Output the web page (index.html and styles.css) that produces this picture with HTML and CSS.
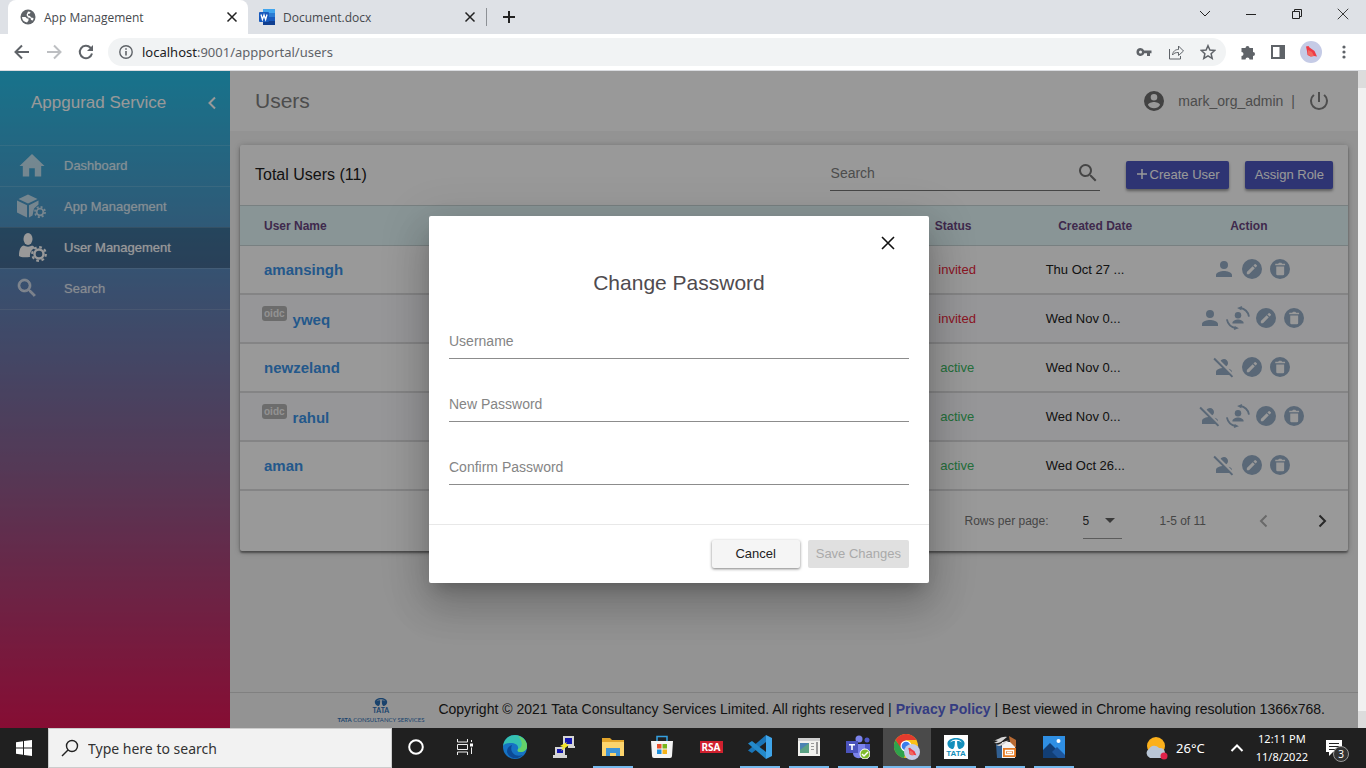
FILE: index.html
```html
<!DOCTYPE html>
<html lang="en">
<head>
<meta charset="utf-8">
<title>App Management</title>
<link rel="stylesheet" href="styles.css">
</head>
<body>
<svg class="sprite" aria-hidden="true">
  <symbol id="person" viewBox="0 0 24 24"><path d="M12 12a4 4 0 1 0 0-8 4 4 0 0 0 0 8zm0 2c-2.700 0-8 1.300-8 4v2h16v-2c0-2.700-5.300-4-8-4z"/></symbol>
  <symbol id="person-off" viewBox="0 0 24 24"><path d="M8.650 5.820C9.360 4.720 10.600 4 12 4c2.210 0 4 1.790 4 4 0 1.400-.72 2.640-1.820 3.350L8.650 5.820zM20 17.170c-.02-1.100-.63-2.110-1.610-2.620-.54-.28-1.130-.54-1.770-.76L20 17.170zM21.190 21.190 2.810 2.810 1.390 4.220l8.890 8.890c-1.810.23-3.390.79-4.670 1.450C4.610 15.070 4 16.100 4 17.220V20h13.170l2.610 2.610 1.410-1.420z"/></symbol>
  <symbol id="cycle" viewBox="0 0 28 28"><circle cx="14" cy="11" r="3.500"/><path d="M8 20v-1c0-2 3.500-3.500 6-3.500s6 1.500 6 3.500v1z"/><path class="ln" d="M16 3C21.500 4 25 8 25.800 12.500M2 15.500C3 20.500 6.500 24 12 25"/><path d="M13 3.200 18.500 1.200 17.500 5.600zM15 25 9.500 27 10.500 22.500z"/></symbol>
  <symbol id="edit" viewBox="0 0 24 24"><circle cx="12" cy="12" r="12"/><path class="cut" d="M5.800 15.600v2.600h2.600l7-7-2.600-2.600zM16.300 10.300l1.500-1.500a1 1 0 0 0 0-1.200l-1.400-1.400a1 1 0 0 0-1.200 0l-1.500 1.500z"/></symbol>
  <symbol id="trash" viewBox="0 0 24 24"><circle cx="12" cy="12" r="12"/><path class="cut" d="M7.500 9h9.500v9a1.500 1.500 0 0 1-1.500 1.500H9A1.500 1.500 0 0 1 7.500 18zM6.300 5.800h3.500l1-1.200h2.800l1 1.200h3.500v1.800H6.300z"/></symbol>
  <symbol id="search" viewBox="0 0 24 24"><path d="M15.500 14h-.79l-.28-.27A6.500 6.500 0 1 0 13.730 14.430l.27.28v.79l5 4.990L20.490 19zm-6 0a4.500 4.500 0 1 1 0-9 4.500 4.500 0 0 1 0 9z"/></symbol>
  <symbol id="cross" viewBox="0 0 16 16"><path d="M2 2l12 12M14 2L2 14"/></symbol>
  <symbol id="gear" viewBox="0 0 16 16"><circle cx="8" cy="8" r="4.500" fill="none" stroke="currentColor" stroke-width="2.400"/><circle cx="8" cy="8" r="6.800" fill="none" stroke="currentColor" stroke-width="2.200" stroke-dasharray="2.700 2.640"/></symbol>
  <symbol id="bird" viewBox="0 0 22 22"><circle cx="11" cy="11" r="11" fill="#c5cbe6"/><path fill="#ee3b45" d="M6 5.500 8.500 5l1 1.500 5 3.500 2.500 5.500-3-.5-3.500.5-3-1.500L7 10z"/><path fill="#f2685f" d="M8 9l4 2 2 4-3 .5-3-2z"/></symbol>
</svg>

<header class="browser">
  <div class="tabs">
    <div class="tab tab-on">
      <svg class="i16" viewBox="0 0 16 16"><circle cx="8" cy="8" r="7.500" fill="#5f6368"/><path fill="#fff" d="M2 8l3.500 0 1.500 1.500h1.500v2L7 13.500C4 13 2 11 2 8zM8 2.500l2.500.5-.5 1.500-2 .5v1.500l2 .5 1 1.500 2.500.5-.5 2.500-2-.5-.5-2L8 8.500 6.500 6z"/></svg>
      <span class="tab-title">App Management</span>
      <button class="plain" aria-label="Close tab"><svg class="i12 ink x2"><use href="#cross"/></svg></button>
    </div>
    <div class="tab tab-off">
      <svg class="i16" viewBox="0 0 16 16"><path fill="#41a5ee" d="M4 0h12v4H4z"/><path fill="#2b7cd3" d="M4 4h12v4H4z"/><path fill="#185abd" d="M4 8h12v4H4z"/><path fill="#103f91" d="M4 12h12v4H4z"/><rect y="3" width="10" height="10" rx="1" fill="#185abd"/><path fill="none" stroke="#fff" stroke-width="1.300" d="M2 5.500l1.400 5L5 6l1.600 4.500 1.400-5"/></svg>
      <span class="tab-title">Document.docx</span>
      <button class="plain" aria-label="Close tab"><svg class="i12 ink x2"><use href="#cross"/></svg></button>
    </div>
    <button class="plain new-tab" aria-label="New tab"><svg class="i14 ink x2" viewBox="0 0 14 14"><path d="M7 1v12M1 7h12"/></svg></button>
    <div class="window-buttons">
      <button class="plain" aria-label="Search tabs"><svg class="i14 ink" viewBox="0 0 14 14"><path d="M2 4l5 5 5-5"/></svg></button>
      <button class="plain" aria-label="Minimize"><svg class="i14 ink" viewBox="0 0 14 14"><path d="M2 7.500h10"/></svg></button>
      <button class="plain" aria-label="Restore"><svg class="i14 ink" viewBox="0 0 14 14"><path d="M2.500 4.500h7v7h-7zM4.500 4.500v-2h7v7h-2"/></svg></button>
      <button class="plain" aria-label="Close"><svg class="i14 ink"><use href="#cross"/></svg></button>
    </div>
  </div>
  <div class="toolbar">
    <div class="nav-buttons">
      <button class="plain" aria-label="Back"><svg class="i16 gray x2" viewBox="0 0 16 16"><path d="M15 8H2M8 1.500L1.500 8 8 14.500"/></svg></button>
      <button class="plain" aria-label="Forward"><svg class="i16 pale x2" viewBox="0 0 16 16"><path d="M1 8h13M8 1.500L14.500 8 8 14.500"/></svg></button>
      <button class="plain" aria-label="Reload"><svg class="i16 gray x2" viewBox="0 0 16 16"><path d="M14 9.500A6.200 6.200 0 1 1 12.500 3.700L14 5.200"/><path fill="#5f6368" stroke="none" d="M15 1v6H9z"/></svg></button>
    </div>
    <div class="address">
      <svg class="i14 gray" viewBox="0 0 14 14"><circle cx="7" cy="7" r="6.200" stroke-width="1.400"/><path stroke-width="1.600" d="M7 6v4.500M7 3.200v1.600"/></svg>
      <span class="url"><b>localhost</b>:9001/appportal/users</span>
      <div class="address-icons">
        <svg class="i16" viewBox="0 0 16 16"><path fill="#5f6368" fill-rule="evenodd" d="M4.500 4a4 4 0 1 0 3.800 5.200H11V12h3V9.200h1.500V6.500H8.200A4 4 0 0 0 4.500 4zm0 2.500a1.500 1.500 0 1 1 0 3 1.500 1.500 0 0 1 0-3z"/></svg>
        <svg class="i16 gray" viewBox="0 0 16 16"><path d="M1.500 5v10h11v-3M4.500 11c.5-4 3-5.500 6-5.500V2l5 5-5 4.500V8.500c-3 0-4.500.5-6 2.500z"/></svg>
        <svg class="i16 gray" viewBox="0 0 16 16"><path stroke-width="1.500" d="M8 1.700l1.900 4.400 4.800.4-3.600 3.200 1.100 4.700L8 11.900l-4.200 2.500 1.100-4.700L1.300 6.500l4.800-.4z"/></svg>
      </div>
    </div>
    <div class="extensions">
      <svg class="i16" viewBox="0 0 16 16"><path fill="#5f6368" d="M1.500 4h4a2 2 0 1 1 4 0h3.500v4a2 2 0 1 1 0 4v3.500H9.500a2 2 0 0 0-4 0h-4V12a2 2 0 0 0 0-4z"/></svg>
      <svg class="i16" viewBox="0 0 16 16"><path fill="#5f6368" fill-rule="evenodd" d="M1 1h14v14H1zM3 3v10h6.500V3z"/></svg>
      <svg class="i22"><use href="#bird"/></svg>
      <svg class="i16" viewBox="0 0 16 16"><g fill="#5f6368"><circle cx="8" cy="3" r="1.600"/><circle cx="8" cy="8" r="1.600"/><circle cx="8" cy="13" r="1.600"/></g></svg>
    </div>
  </div>
</header>

<div class="viewport">
  <div class="app">
    <aside class="sidebar">
      <div class="brand">
        <span>Appgurad Service</span>
        <button class="plain" aria-label="Collapse menu"><svg class="i14 x2" viewBox="0 0 14 14"><path d="M10 1.500L4.500 7l5.500 5.500"/></svg></button>
      </div>
      <nav class="menu">
        <a href="#" class="menu-item"><svg class="menu-icon" viewBox="0 0 32 32"><path d="M16 5 3.500 17h3.300v10.500h6.400v-8.300h5.600v8.300h6.400V17h3.300z"/></svg>Dashboard</a>
        <a href="#" class="menu-item"><svg class="menu-icon" viewBox="0 0 32 32"><path d="M12 4.500 21.500 9 12 13.500 2.500 9zM1 10.500l10 4.800v12.200L1 22.500zM13 15.300l9.500-4.800v4l-4.500 4-1.500 7-3.500 2z"/><svg x="18" y="16" width="12" height="12"><use href="#gear"/></svg></svg>App Management</a>
        <a href="#" class="menu-item menu-on"><svg class="menu-icon" viewBox="0 0 32 32"><ellipse cx="12" cy="8" rx="4.500" ry="6"/><path d="M3 25c0-7 2-10 5-10.500 2 1.500 6 1.500 8 0 1.500.3 2.500 1.500 3 2.500-4 1.500-5.500 5-5 9-6 .5-9.500.3-11-1z"/><svg x="15" y="15" width="16" height="16"><use href="#gear"/></svg></svg>User Management</a>
        <a href="#" class="menu-item"><svg class="menu-icon" viewBox="0 0 32 32"><svg x="-1" y="4" width="24" height="24" stroke="currentColor" stroke-width=".7"><use href="#search"/></svg></svg>Search</a>
      </nav>
    </aside>

    <div class="main">
      <header class="page-head">
        <h1>Users</h1>
        <div class="account">
          <svg class="i24" viewBox="0 0 24 24"><path fill="#6e6e6e" fill-rule="evenodd" d="M12 2a10 10 0 1 0 0 20 10 10 0 0 0 0-20zm0 3a3.300 3.300 0 1 1 0 6.600A3.300 3.300 0 0 1 12 5zm0 14.200a7.200 7.200 0 0 1-6-3.220c.03-2 4-3.080 6-3.080s5.970 1.090 6 3.080a7.200 7.200 0 0 1-6 3.220z"/></svg>
          <span class="account-name">mark_org_admin</span>
          <span class="account-bar">|</span>
          <button class="plain" aria-label="Sign out"><svg class="i24" viewBox="0 0 24 24"><path fill="#808080" d="M13 3h-2v10h2zm4.830 2.170-1.420 1.420A7 7 0 1 1 7.580 6.580L6.170 5.170a9 9 0 1 0 11.660 0z"/></svg></button>
        </div>
      </header>

      <section class="card">
        <div class="card-head">
          <h2>Total Users (11)</h2>
          <div class="search-field">
            <input type="search" placeholder="Search" aria-label="Search users">
            <svg class="i24" fill="#757575"><use href="#search"/></svg>
          </div>
          <button class="primary"><svg class="i12" viewBox="0 0 12 12"><path stroke="#fff" stroke-width="1.500" d="M6 1v10M1 6h10"/></svg>Create User</button>
          <button class="primary">Assign Role</button>
        </div>
        <table class="users">
          <colgroup><col class="c-name"><col class="c-status"><col class="c-date"><col class="c-action"></colgroup>
          <thead><tr><th class="name">User Name</th><th class="status">Status</th><th class="date">Created Date</th><th class="actions">Action</th></tr></thead>
          <tbody>
            <tr><td class="name"><a href="#">amansingh</a></td><td class="status invited">invited</td><td class="date">Thu Oct 27 ...</td><td class="actions"><div class="acts"><svg class="who"><use href="#person"/></svg><svg><use href="#edit"/></svg><svg><use href="#trash"/></svg></div></td></tr>
            <tr class="tint"><td class="name"><span class="oidc">oidc</span><a href="#">yweq</a></td><td class="status invited">invited</td><td class="date">Wed Nov 0...</td><td class="actions"><div class="acts"><svg class="who"><use href="#person"/></svg><svg class="cyc"><use href="#cycle"/></svg><svg><use href="#edit"/></svg><svg><use href="#trash"/></svg></div></td></tr>
            <tr><td class="name"><a href="#">newzeland</a></td><td class="status active">active</td><td class="date">Wed Nov 0...</td><td class="actions"><div class="acts"><svg class="who"><use href="#person-off"/></svg><svg><use href="#edit"/></svg><svg><use href="#trash"/></svg></div></td></tr>
            <tr class="tint"><td class="name"><span class="oidc">oidc</span><a href="#">rahul</a></td><td class="status active">active</td><td class="date">Wed Nov 0...</td><td class="actions"><div class="acts"><svg class="who"><use href="#person-off"/></svg><svg class="cyc"><use href="#cycle"/></svg><svg><use href="#edit"/></svg><svg><use href="#trash"/></svg></div></td></tr>
            <tr><td class="name"><a href="#">aman</a></td><td class="status active">active</td><td class="date">Wed Oct 26...</td><td class="actions"><div class="acts"><svg class="who"><use href="#person-off"/></svg><svg><use href="#edit"/></svg><svg><use href="#trash"/></svg></div></td></tr>
          </tbody>
        </table>
        <div class="pager">
          <label for="rows">Rows per page:</label>
          <div class="rows-box"><select id="rows"><option>5</option><option>10</option></select><svg class="caret" viewBox="0 0 10 5"><path d="M0 0h10L5 5z"/></svg></div>
          <span class="range">1-5 of 11</span>
          <button class="plain" aria-label="Previous page"><svg class="i14 prev" viewBox="0 0 14 14"><path d="M9.500 1.500L4 7l5.500 5.500"/></svg></button>
          <button class="plain next-button" aria-label="Next page"><svg class="i14 next" viewBox="0 0 14 14"><path d="M4.500 1.500L10 7l-5.500 5.500"/></svg></button>
        </div>
      </section>

      <footer class="page-foot">
        <div class="tcs">
          <svg class="tcs-mark" viewBox="0 0 14 9"><path fill="#2b6fb5" d="M7 0c4 0 7 2 7 4.500S12 9 9.500 9C8 8 7.900 5 7.900 2.500c2 0 3 .5 4 1.500C11 2 9 1.300 7 1.300S3 2 2 4c1-1 2-1.500 4.100-1.500C6.100 5 6 8 4.500 9 2 9 0 7 0 4.500S3 0 7 0z"/></svg>
          <b>TATA</b>
          <span><b>TATA</b> CONSULTANCY SERVICES</span>
        </div>
        <p>Copyright © 2021 Tata Consultancy Services Limited. All rights reserved | <a href="#">Privacy Policy</a> | Best viewed in Chrome having resolution 1366x768.</p>
      </footer>
    </div>

    <div class="backdrop">
      <form class="dialog" role="dialog" aria-label="Change Password">
        <div class="dialog-body">
          <button type="button" class="plain dialog-close" aria-label="Close"><svg class="i16" stroke-width="1.600"><use href="#cross"/></svg></button>
          <h2>Change Password</h2>
          <input type="text" placeholder="Username" aria-label="Username">
          <input type="password" placeholder="New Password" aria-label="New Password">
          <input type="password" placeholder="Confirm Password" aria-label="Confirm Password">
        </div>
        <div class="dialog-foot">
          <button type="button" class="cancel">Cancel</button>
          <button type="submit" class="save" disabled>Save Changes</button>
        </div>
      </form>
    </div>
  </div>
  <div class="scrollbar"><div class="thumb"></div><div class="thumb"></div></div>
</div>

<footer class="taskbar">
  <button class="start" aria-label="Start"><svg class="i16" viewBox="0 0 16 16"><path fill="#fff" d="M0 2.200 7 1.200v6.300H0zM8 1.100 16 0v7.500H8zM0 8.500h7v6.300l-7-1zM8 8.500h8V16l-8-1.100z"/></svg></button>
  <label class="win-search">
    <svg class="i18" viewBox="0 0 18 18"><g fill="none" stroke="#222" stroke-width="1.400"><circle cx="11" cy="7" r="5.500"/><path d="M7 11l-6 6"/></g></svg>
    <input type="text" placeholder="Type here to search" aria-label="Type here to search">
  </label>
  <div class="apps">
    <button aria-label="Cortana"><svg class="i16" viewBox="0 0 16 16"><circle cx="8" cy="8" r="6.800" fill="none" stroke="#fff" stroke-width="2"/></svg></button>
    <button aria-label="Task view"><svg class="i16" viewBox="0 0 16 16"><path fill="none" stroke="#eee" d="M.5 0v3h10V0M.5 5.500h10v5H.5zM.5 16v-3h10v3M14.500 1v2M14.500 8.500V15"/><path fill="#fff" d="M13 4.500h3v3h-3z"/></svg></button>
    <button class="app-gap" aria-label="Edge"><svg class="i24" viewBox="0 0 24 24"><circle cx="12" cy="12" r="12" fill="#1673c4"/><path fill="#35c1b1" d="M0 11C1 4 6 0 12 0c7 0 12 5 12 11 0 4-3 6-7 6-2 0-3-1-2-3 1-4-3-6-7-6-4 0-7 1-8 3z"/><path fill="#65d269" d="M15 1c6 2 9 6 9 10 0 4-3 6-7 6-2 0-3-1-2-3 5-1 5-8 0-13z"/><path fill="#0c4a96" d="M9 10c-3 7 3 13 11 10-5 5-14 4-16-3 0-4 2-6 5-7z"/></svg></button>
    <button aria-label="PuTTY"><svg class="i22" viewBox="0 0 22 22"><path fill="#d5d5d5" d="M10 0h11v10H10zM2 11h10v8H2zM0 19h14v3H0zM15 10h7v2h-7z"/><path fill="#1518b0" d="M12 2h7v6h-7zM4 13h6v4H4z"/><path fill="#f4e52a" d="M14 6l-7 4 3 1-2 4 8-6-3-1z"/></svg></button>
    <button class="open" aria-label="File Explorer"><svg class="i24" viewBox="0 0 24 24"><path fill="#e3a52b" d="M1 3h8l2 2h12v5H1z"/><path fill="#fcd46d" d="M1 7h22v14H1z"/><path fill="#3f94d6" d="M5 21v-8h14v8h-4v-3H9v3z"/></svg></button>
    <button aria-label="Store"><svg class="i24" viewBox="0 0 24 24"><path fill="none" stroke="#35a0e0" stroke-width="1.500" d="M7 6V1.500h10V6"/><path fill="#f4f4f4" d="M1 6h22l-1 15q0 2-2 2H4q-2 0-2-2z"/><path fill="#e8502c" d="M7 9h4.500v4.500H7z"/><path fill="#77b51c" d="M12.500 9H17v4.500h-4.500z"/><path fill="#1c8fdc" d="M7 14.500h4.500V19H7z"/><path fill="#f5b319" d="M12.500 14.500H17V19h-4.500z"/></svg></button>
    <button><span class="rsa">RSA</span></button>
    <button class="open" aria-label="Code editor"><svg class="i24" viewBox="0 0 24 24"><path fill="#1a75b8" d="M18 0v7L4 18l-4-2.500z"/><path fill="#2489ca" d="M18 24v-7L4 6 0 8.500z"/><path fill="#3fa5ea" d="M18 0l6 3v18l-6 3z"/></svg></button>
    <button class="open" aria-label="Viewer"><svg class="i22" viewBox="0 0 22 22"><path fill="#f1f1ee" d="M0 2h22v18H0z"/><path fill="#cfcfcf" d="M0 2h22v3H0z"/><path fill="#5aa183" d="M2 7h9v10H2z"/><path fill="#4a83b3" d="M2 7h9L2 14z"/><path fill="#999" d="M13 7h3v1h-3zM13 10h3v1h-3zM13 13h3v1h-3zM18 6h2v12h-2z"/></svg></button>
    <button class="open" aria-label="Teams"><svg class="i24" viewBox="0 0 24 24"><circle cx="13" cy="4" r="3.500" fill="#7b83eb"/><circle cx="21" cy="5" r="2.500" fill="#5059c9"/><path fill="#5059c9" d="M17 9h7v8q-3 4-7 2z"/><path fill="#7b83eb" d="M7 9h12v9q-2 6-8 5-4-1-4-5z"/><path fill="#4b53bc" d="M0 6h12v12H0z"/><path fill="#fff" d="M3 9h6v1.500H6.800V15H5.200v-4.500H3z"/><circle cx="19" cy="19" r="5" fill="#7fba2c" stroke="#fff"/><path fill="none" stroke="#fff" stroke-width="1.500" d="M16 19l2 2 4-4"/></svg></button>
    <button class="open current" aria-label="Chrome"><svg class="i26" viewBox="0 0 26 26"><circle cx="12" cy="12" r="12" fill="#fbc116"/><path fill="#2fa24c" d="M1.600 6 8 14l4 4-2 6A12 12 0 0 1 1.600 6z"/><path fill="#e33b2e" d="M1.600 6A12 12 0 0 1 22.400 6H12l-5 8z"/><circle cx="12" cy="12" r="5.500" fill="#fff"/><circle cx="12" cy="12" r="4.300" fill="#3b7ded"/><svg x="10" y="10" width="16" height="16"><use href="#bird"/></svg></svg></button>
    <button class="open"><span class="tata"><svg viewBox="0 0 14 9"><path fill="#158fbb" d="M7 0c4 0 7 2 7 4.500S12 9 9.500 9C8 8 7.900 5 7.900 2.500c2 0 3 .5 4 1.500C11 2 9 1.300 7 1.300S3 2 2 4c1-1 2-1.500 4.100-1.500C6.100 5 6 8 4.500 9 2 9 0 7 0 4.500S3 0 7 0z"/></svg>TATA</span></button>
    <button class="open" aria-label="Impress"><svg class="i24" viewBox="0 0 24 24"><path fill="#315f91" d="M3 9l7 3v11H4z"/><path fill="#f3f3f3" d="M9 7h9l4 4v12H9z"/><path fill="#b86a33" d="M16 1l7 4v8l-6-6z"/><path fill="#d5d5d5" d="M0 5C5 6 7 1 14 2 10 5 8 9 1 8l4-2zM3 10c6 0 7-5 13-4-4 1-5 5-10 5z"/><path fill="#e57b25" d="M10 13h13v9H10z"/><path fill="none" stroke="#fff" stroke-width="1.300" d="M12.500 15.500h8v4h-8zM14 17.500h5"/></svg></button>
    <button class="open" aria-label="Photos"><svg class="i24" viewBox="0 0 24 24"><path fill="#2f8fe3" d="M1 1h22v22H1z"/><path fill="#123e75" d="M1 15l7-7 15 15H1z"/><path fill="#1d559b" d="M10 17l5-5 8 8v3h-7z"/><circle cx="16.500" cy="6" r="2" fill="#fff"/></svg></button>
  </div>
  <div class="tray">
    <svg class="i24" viewBox="0 0 24 24"><circle cx="12" cy="10" r="9" fill="#fbb01b"/><path fill="#b9c6d6" d="M6 22a5 5 0 0 1-1-9 6 6 0 0 1 10-1 5 5 0 0 1 6 5c0 3-2 5-4 5z"/><circle cx="20" cy="20" r="3.500" fill="#e0224a"/></svg>
    <span class="temp">26°C</span>
    <svg class="i14 up" viewBox="0 0 14 14"><path d="M1.500 10L7 4.500l5.500 5.500"/></svg>
    <div class="clock"><span>12:11 PM</span><span>11/8/2022</span></div>
    <div class="notes"><svg class="i18" viewBox="0 0 18 18"><path fill="#fff" d="M1 1h16v12h-9l-4 4v-4H1z"/><path stroke="#222" d="M4 4.500h10M4 7.500h10M4 10.500h6"/></svg><span class="count">3</span></div>
  </div>
</footer>
</body>
</html>
```
FILE: styles.css
```css
* { box-sizing: border-box; }
body { margin: 0; height: 100vh; display: flex; flex-direction: column; overflow: hidden; font-family: "Liberation Sans", Arial, sans-serif; font-size: 13px; color: #212121; }
h1, h2, p { margin: 0; font-weight: 400; }
a { text-decoration: none; }
button, input, select { font-family: inherit; }
svg { display: block; flex: none; }
.sprite { position: absolute; width: 0; height: 0; }
.plain { display: flex; padding: 0; border: 0; background: none; }
.i12 { width: 12px; height: 12px; }
.i14 { width: 14px; height: 14px; }
.i16 { width: 16px; height: 16px; }
.i18 { width: 18px; height: 18px; }
.i22 { width: 22px; height: 22px; }
.i24 { width: 24px; height: 24px; }
.i26 { width: 26px; height: 26px; }
.ink { fill: none; stroke: #222; }
.gray { fill: none; stroke: #5f6368; }
.pale { fill: none; stroke: #bdbfc2; }
.x2 { stroke-width: 2px; }

/* Browser window */
.browser { font-family: "Noto Sans", sans-serif; background: #fff; border-bottom: 1px solid #dadce0; }
.tabs { display: flex; height: 34px; padding-left: 8px; background: #dee1e6; align-items: center; }
.tab { display: flex; align-items: center; gap: 8px; height: 34px; padding: 0 10px 0 12px; font-family: "Open Sans", sans-serif; font-size: 12px; color: #45484d; }
.tab-on { width: 240px; background: #fff; border-radius: 8px 8px 0 0; }
.tab-off { width: 238px; padding-left: 11px; }
.tab-title { flex: 1; }
.new-tab { height: 18px; align-items: center; border-left: 1px solid #8d9196; padding-left: 15px; }
.window-buttons { display: flex; gap: 32px; margin-left: auto; padding: 0 16px 6px 0; }
.toolbar { display: flex; align-items: center; height: 36px; padding-right: 14px; }
.nav-buttons { display: flex; gap: 16px; padding: 0 14px; }
.address { flex: 1; display: flex; align-items: center; height: 28px; border-radius: 14px; background: #f1f3f4; padding: 0 10px 0 11px; gap: 9px; }
.url { font-size: 13px; color: #5f6368; }
.url b { font-weight: 400; color: #202124; }
.address-icons { display: flex; gap: 16px; margin-left: auto; }
.extensions { display: flex; align-items: center; gap: 14px; padding-left: 14px; }

/* Page */
.viewport { flex: 1; display: flex; min-height: 0; }
.app { flex: 1; display: flex; position: relative; background: #f5f5f5; }
.scrollbar { width: 8px; background: #f1f1f1; display: flex; flex-direction: column; justify-content: space-between; }
.thumb { height: 17px; background: #dcdcdc; }
.sidebar { width: 230px; background: linear-gradient(#28c0e9, #5f84b8 33%, #8c6090 60%, #e01656); color: #fff; }
.brand { display: flex; align-items: center; justify-content: space-between; height: 64px; padding: 0 11px 0 31px; margin-bottom: 10px; font-size: 17px; }
.brand svg { fill: none; stroke: #fff; }
.menu-item { display: flex; align-items: center; gap: 16px; height: 41px; padding: 0 0 2px 16px; border-top: 1px solid rgba(255, 255, 255, .14); color: rgba(255, 255, 255, .68); text-shadow: 0 0 1px rgba(255, 255, 255, .6); }
.menu-item:last-child { height: 42px; border-bottom: 1px solid rgba(255, 255, 255, .14); }
.menu-icon { width: 32px; height: 32px; fill: currentColor; }
.menu-on { background: rgba(0, 0, 0, .22); color: #fff; }
.main { flex: 1; display: flex; flex-direction: column; min-width: 0; }
.page-head { display: flex; align-items: center; justify-content: space-between; height: 60px; padding: 0 27px 0 25px; background: #fff; color: #808080; }
.page-head h1 { font-size: 21px; }
.account { display: flex; align-items: center; font-size: 14px; }
.account-name { padding: 0 8px 0 12px; }
.account-bar { padding-right: 12px; }
.card { margin: 14px 10px; background: #fff; border-radius: 2px; box-shadow: 0 2px 2px rgba(0, 0, 0, .4), 0 1px 6px rgba(0, 0, 0, .25); }
.card-head { display: flex; align-items: center; height: 60px; padding: 0 15px; gap: 16px; }
.card-head h2 { font-size: 16px; margin-right: auto; }
.search-field { display: flex; align-items: center; width: 270px; height: 32px; margin-right: 10px; padding-bottom: 4px; border-bottom: 1px solid #757575; }
.search-field input { flex: 1; min-width: 0; border: 0; outline: 0; background: none; font-size: 14px; padding: 0 1px; }
.search-field input::placeholder { color: #808080; opacity: 1; }
.primary { display: flex; align-items: center; gap: 2px; height: 28px; padding: 0 9px 2px 10px; border: 0; border-radius: 2px; background: #4e58c0; color: #fff; font-size: 13px; box-shadow: 0 2px 3px rgba(0, 0, 0, .4); }
.users { width: 100%; border-collapse: separate; border-spacing: 0; table-layout: fixed; }
.c-name { width: 58%; }
.c-status { width: 13%; }
.c-date { width: 12%; }
.c-action { width: 17%; }
.users th { height: 41px; padding: 0; background: #e5f9fa; border-top: 1px solid #c9d5d8; border-bottom: 1px solid #c9d5d8; font-size: 12px; color: #6a4580; text-align: center; }
.users td { height: 49px; padding: 0; border-bottom: 2px solid #dcdcde; text-align: center; }
.users .name { padding-left: 24px; text-align: left; }
.users th.status { padding-right: 3px; }
.users th.date { padding-left: 4px; }
.users th.actions { padding-right: 10px; }
.users td.date { text-align: left; padding-left: 19px; }
.users td.status { padding-left: 5px; }
.users td.actions { padding: 0 3px 1px 0; }
.users a { font-size: 15px; font-weight: 700; color: #3b93e8; }
.tint td { background: #fafbfd; }
.invited { color: #e8283c; }
.active { color: #3cb963; }
.oidc { display: inline-block; margin: 0 6px 0 -2px; padding: 0 2px; border-radius: 3px; background: #b4b4b4; color: #f4f4f4; font-size: 10px; font-weight: 700; line-height: 15px; vertical-align: 8px; }
.users .tint .name { padding-bottom: 4px; }
.acts { display: flex; justify-content: center; align-items: center; gap: 8px; fill: #96adc6; }
.acts svg { width: 20px; height: 20px; }
.acts .who { width: 24px; height: 24px; margin: 0 -2px; }
.acts .cyc { width: 26px; height: 26px; margin: 0 -3px; }
.ln { fill: none; stroke: #96adc6; stroke-width: 2px; }
.cut { fill: #fff; }
.pager { display: flex; align-items: center; height: 60px; padding-right: 19px; font-size: 12px; color: #757575; justify-content: flex-end; }
.rows-box { display: flex; align-items: center; width: 39px; height: 36px; margin: 0 38px 0 34px; border-bottom: 1px solid #9a9a9a; }
.rows-box select { flex: 1; appearance: none; border: 0; background: none; font-size: 12px; padding: 0; color: #333; }
.caret { width: 10px; height: 5px; margin-right: 7px; fill: #616161; }
.range { margin-right: 51px; }
.prev { fill: none; stroke: #b0b0b0; stroke-width: 2px; }
.next { fill: none; stroke: #444; stroke-width: 2px; }
.next-button { margin-left: 44px; }
.page-foot { display: flex; align-items: center; justify-content: flex-end; gap: 14px; height: 36px; margin-top: auto; padding-right: 33px; border-top: 1px solid #d6d6d6; font-size: 14px; white-space: nowrap; }
.page-foot p { padding-bottom: 4px; }
.page-foot a { color: #5864d8; font-weight: 700; }
.tcs { display: flex; flex-direction: column; align-items: center; color: #2b6fb5; font-family: Lato, sans-serif; font-size: 7px; line-height: 9px; }
.tcs-mark { width: 14px; height: 8px; }
.tcs span { font-size: 6px; }

/* Dialog */
.backdrop { position: absolute; inset: 0; display: flex; align-items: center; justify-content: center; background: rgba(0, 0, 0, .4); }
.dialog { width: 500px; background: #fff; border-radius: 2px; box-shadow: 0 11px 15px -7px rgba(0, 0, 0, .2), 0 24px 38px 3px rgba(0, 0, 0, .14), 0 9px 46px 8px rgba(0, 0, 0, .12); }
.dialog-body { display: flex; flex-direction: column; padding: 19px 20px 39px; }
.dialog-close { align-self: flex-end; margin-right: 13px; fill: none; stroke: #111; }
.dialog-body h2 { margin: 20px 0 33px; font-size: 21px; line-height: 24px; text-align: center; color: #4f4b4f; }
.dialog-body input { height: 31px; margin-bottom: 32px; padding: 0 0 4px; border: 0; border-bottom: 1px solid #8c8c8c; outline: 0; font-size: 14px; }
.dialog-body input:last-child { margin-bottom: 0; }
.dialog-body input::placeholder { color: #858585; opacity: 1; }
.dialog-foot { display: flex; justify-content: flex-end; gap: 8px; padding: 15px 20px; border-top: 1px solid #e8e8e8; }
.dialog-foot button { height: 28px; padding: 0 8px 2px; border: 0; border-radius: 2px; font-size: 13px; }
.dialog-foot .cancel { width: 88px; background: #f5f5f5; color: #222; box-shadow: 0 1px 3px rgba(0, 0, 0, .5); }
.save { background: #e0e0e0; color: #aaa; }

/* Taskbar */
.taskbar { display: flex; height: 40px; background: #202020; color: #fff; font-family: "Noto Sans", sans-serif; }
.start { display: flex; align-items: center; justify-content: center; width: 48px; padding: 0; border: 0; background: none; }
.win-search { display: flex; align-items: center; gap: 9px; width: 344px; padding-left: 12px; background: #f2f2f2; border: 1px solid #ccc; }
.win-search input { flex: 1; border: 0; outline: 0; padding: 0; background: none; font-size: 14px; }
.win-search input::placeholder { color: #333; opacity: 1; }
.apps { display: flex; gap: 1px; }
.apps button { display: flex; align-items: center; justify-content: center; width: 48px; padding: 0; border: 0; border-bottom: 2px solid transparent; background: none; }
.apps .open { border-bottom-color: #76b9ed; background-clip: padding-box; }
.apps .open:not(.current) { width: 40px; margin: 0 4px; }
.apps .current { background: #4a4a4a; }
.apps .app-gap { margin-left: 1px; }
.rsa { padding: 0 2px; background: #d0202e; color: #fff; font-size: 10px; font-weight: 700; line-height: 12px; }
.tata { display: flex; flex-direction: column; align-items: center; width: 24px; height: 24px; padding-top: 3px; background: #fff; color: #158fbb; font: 700 8px/9px "Liberation Sans", sans-serif; }
.tata svg { width: 18px; height: 11px; }
.tray { display: flex; align-items: center; margin-left: auto; padding-right: 23px; }
.temp { margin: 0 25px 0 8px; font-size: 13px; }
.up { fill: none; stroke: #fff; stroke-width: 2px; }
.clock { display: flex; flex-direction: column; align-items: center; margin: 0 17px 0 12px; font-size: 11px; line-height: 18px; }
.notes { position: relative; }
.count { position: absolute; left: 8px; top: 7px; width: 16px; height: 16px; border: 1px solid #999; border-radius: 8px; background: #333; font-size: 10px; line-height: 14px; text-align: center; }
```
